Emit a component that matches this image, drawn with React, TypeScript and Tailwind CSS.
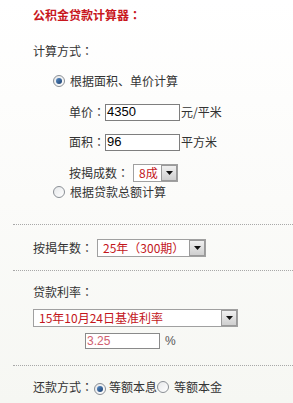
import React from 'react';

const font = { fontFamily: '"Noto Sans CJK SC", "Liberation Sans", sans-serif' };
const num = { fontFamily: '"Liberation Sans", sans-serif' };

// centred full-width colon, like the original page's font
function Colon() {
    return <span style={{ fontFamily: '"Noto Sans CJK TC", sans-serif' }}>：</span>;
}

function Radio({ checked }: { checked?: boolean }) {
    return (
        <span className="inline-flex w-[12px] h-[12px] shrink-0 items-center justify-center rounded-full border border-[#8a8f95] bg-gradient-to-br from-[#e6e8ea] to-[#ffffff]">
            {checked && (
                <span className="w-[6px] h-[6px] rounded-full bg-gradient-to-br from-[#5a8fc8] to-[#1c3f6e]" />
            )}
        </span>
    );
}

function Arrow() {
    return (
        <span className="flex w-[16px] h-full shrink-0 items-center justify-center border border-[#9a9a9a] bg-gradient-to-b from-[#f0f0f0] to-[#cfcfcf]">
            <svg width="7" height="4" viewBox="0 0 7 4">
                <path d="M0 0 L7 0 L3.5 4 Z" fill="#111" />
            </svg>
        </span>
    );
}

function Select({ value, width }: { value: string; width: string }) {
    return (
        <div className={`flex h-[18px] items-stretch border border-[#a0a0a0] bg-white ${width}`}>
            <span className="flex-1 pl-[5px] text-[12px] leading-[16px] text-[#c3161c] whitespace-nowrap overflow-hidden">
                {value}
            </span>
            <Arrow />
        </div>
    );
}

function Dotted({ mt }: { mt: string }) {
    return <div className={`border-t border-dotted border-[#a8a8a8] ${mt}`} />;
}

export default function App() {
    return (
        <div
            style={font}
            className="w-[293px] h-[403px] overflow-hidden bg-gradient-to-b from-white via-[#fbfbf9] to-[#f6f7f3] pl-[13px] text-[12px] text-[#333]"
        >
            <div className="pl-[20px]">
                <div className="mt-[5px] h-[20px] flex items-center font-bold text-[#c8161d]">
                    公积金贷款计算器<Colon />
                </div>

                <div className="mt-[16px] h-[20px] flex items-center">计算方式<Colon /></div>

                <div className="mt-[10px] h-[20px] flex items-center pl-[20px] gap-[5px]">
                    <Radio checked />
                    <span>根据面积、单价计算</span>
                </div>

                <div className="mt-[11px] h-[20px] flex items-center pl-[36px]">
                    <span>单价<Colon /></span>
                    <span className="flex h-[17px] w-[75px] items-center border border-[#7e7e7e] bg-white pl-[1px] text-[13px] text-black" style={num}>
                        4350
                    </span>
                    <span className="ml-[1px]">元/平米</span>
                </div>

                <div className="mt-[10px] h-[20px] flex items-center pl-[36px]">
                    <span>面积<Colon /></span>
                    <span className="flex h-[17px] w-[75px] items-center border border-[#7e7e7e] bg-white pl-[1px] text-[13px] text-black" style={num}>
                        96
                    </span>
                    <span className="ml-[1px]">平方米</span>
                </div>

                <div className="mt-[11px] h-[20px] flex items-center pl-[36px]">
                    <span className="w-[64px]">按揭成数<Colon /></span>
                    <Select value="8成" width="w-[45px]" />
                </div>

                <div className="mt-[-1px] h-[20px] flex items-center pl-[20px] gap-[5px]">
                    <Radio />
                    <span>根据贷款总额计算</span>
                </div>
            </div>

            <Dotted mt="mt-[22px]" />

            <div className="pl-[20px]">
                <div className="mt-[13px] h-[20px] flex items-center">
                    <span className="w-[64px]">按揭年数<Colon /></span>
                    <Select value="25年（300期）" width="w-[109px]" />
                </div>
            </div>

            <Dotted mt="mt-[12px]" />

            <div className="pl-[20px]">
                <div className="mt-[11px] h-[20px] flex items-center">贷款利率<Colon /></div>
                <div className="mt-[6px] h-[20px] flex items-center">
                    <Select value="15年10月24日基准利率" width="w-[205px]" />
                </div>
                <div className="mt-[3px] h-[20px] flex items-center pl-[52px]">
                    <span className="flex h-[16px] w-[75px] items-center border border-[#8a8a8a] bg-white pl-[1px] text-[12px] text-[#d06070]" style={num}>
                        3.25
                    </span>
                    <span className="ml-[5px] text-[#555]" style={num}>%</span>
                </div>
            </div>

            <Dotted mt="mt-[14px]" />

            <div className="pl-[20px]">
                <div className="mt-[11px] h-[20px] flex items-center">
                    <span>还款方式<Colon /></span>
                    <span className="ml-[1px]"><Radio checked /></span>
                    <span className="ml-[3px]">等额本息</span>
                    <Radio />
                    <span className="ml-[5px]">等额本金</span>
                </div>
            </div>
        </div>
    );
}
